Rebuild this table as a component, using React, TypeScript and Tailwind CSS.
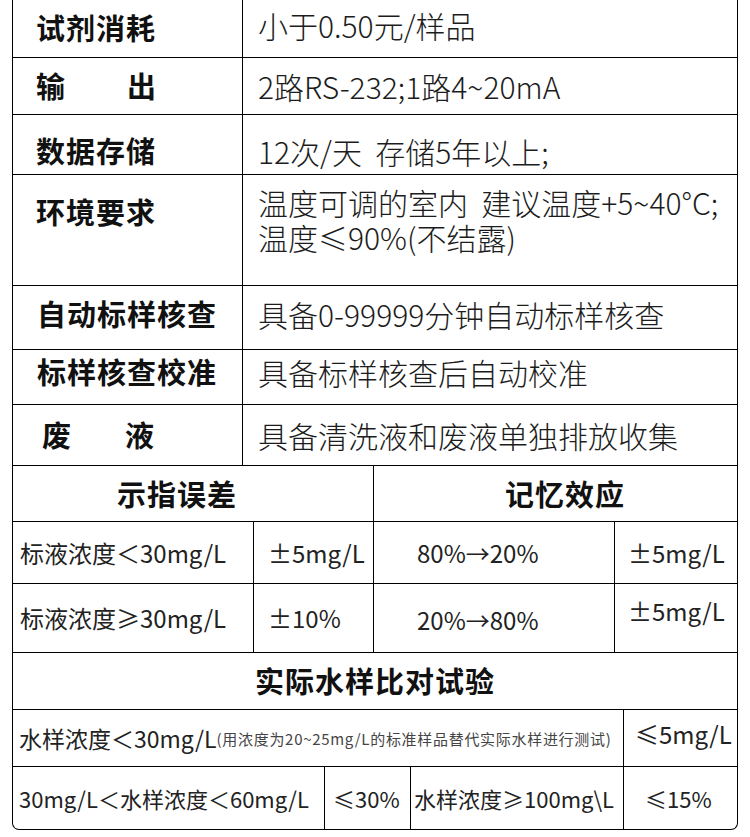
import React from "react";

/* ─── Linha de especificação (rótulo | valor) ─── */
function SpecRow({
  label,
  children,
  rowClass,
  labelClass = "",
  valueClass = "",
}: {
  label: React.ReactNode;
  children: React.ReactNode;
  rowClass: string;
  labelClass?: string;
  valueClass?: string;
}) {
  return (
    <div className={`flex border-b border-black ${rowClass}`}>
      <div
        className={`flex w-[230px] shrink-0 border-r border-black pl-[23px] text-[29px] font-bold tracking-[1px] text-[#111] ${labelClass}`}
      >
        {label}
      </div>
      <div className={`flex flex-1 whitespace-nowrap pl-[15px] text-[30px] font-light text-[#1c1c1c] ${valueClass}`}>
        {children}
      </div>
    </div>
  );
}

export default function App() {
  return (
    <div className="min-h-screen bg-white">
      <div className="ml-[12px] w-[726px] overflow-hidden rounded-b-[7px] border-x border-b border-black font-['Noto_Sans_CJK_SC',sans-serif]">
        {/* Especificações gerais */}
        <SpecRow label="试剂消耗" rowClass="h-[58px]" labelClass="items-center pb-[2px]" valueClass="items-center pb-[6px]">
          小于0.50元/样品
        </SpecRow>
        <SpecRow
          label={
            <span className="flex w-[121px] justify-between">
              <span>输</span>
              <span>出</span>
            </span>
          }
          rowClass="h-[57px]"
          labelClass="items-center"
          valueClass="items-center"
        >
          2路RS-232;1路4~20mA
        </SpecRow>
        <SpecRow label="数据存储" rowClass="h-[60px]" labelClass="items-center pt-[12px]" valueClass="items-center pt-[14px]">
          12次/天&nbsp;&nbsp;存储5年以上;
        </SpecRow>
        <SpecRow label="环境要求" rowClass="h-[111px]" labelClass="items-start pt-[19px] leading-[35px]" valueClass="items-start pt-[10px]">
          <div className="leading-[35px]">
            <div>温度可调的室内&nbsp;&nbsp;建议温度+5~40°C;</div>
            <div>温度≤90%(不结露)</div>
          </div>
        </SpecRow>
        <SpecRow label="自动标样核查" rowClass="h-[64px]" labelClass="items-center pb-[8px] pl-[24px]" valueClass="items-center pb-[6px]">
          具备0-99999分钟自动标样核查
        </SpecRow>
        <SpecRow label="标样核查校准" rowClass="h-[55px]" labelClass="items-center pb-[10px] pl-[24px]" valueClass="items-center pb-[10px]">
          具备标样核查后自动校准
        </SpecRow>
        <SpecRow
          label={
            <span className="flex w-[113px] justify-between">
              <span>废</span>
              <span>液</span>
            </span>
          }
          rowClass="h-[61px]"
          labelClass="items-center pl-[29px]"
          valueClass="items-center"
        >
          具备清洗液和废液单独排放收集
        </SpecRow>

        {/* 示指误差 / 记忆效应 */}
        <div className="flex h-[56px] border-b border-black text-[29px] font-bold tracking-[1px] text-[#111]">
          <div className="flex w-[361px] shrink-0 items-center border-r border-black pl-[104px]">示指误差</div>
          <div className="flex flex-1 items-center pl-[131px]">记忆效应</div>
        </div>
        <div className="flex h-[62px] whitespace-nowrap border-b border-black text-[24px] text-[#222]">
          <div className="flex w-[241px] shrink-0 items-center border-r border-black pl-[7px]">标液浓度＜30mg/L</div>
          <div className="flex w-[120px] shrink-0 items-center border-r border-black pl-[14px]">±5mg/L</div>
          <div className="flex w-[241px] shrink-0 items-center border-r border-black pl-[43px]">80%→20%</div>
          <div className="flex flex-1 items-center pl-[13px]">±5mg/L</div>
        </div>
        <div className="flex h-[69px] whitespace-nowrap border-b border-black text-[24px] text-[#222]">
          <div className="flex w-[241px] shrink-0 items-center border-r border-black pl-[7px]">标液浓度≥30mg/L</div>
          <div className="flex w-[120px] shrink-0 items-center border-r border-black pl-[14px]">±10%</div>
          <div className="flex w-[241px] shrink-0 items-center border-r border-black pl-[43px] pt-[4px]">20%→80%</div>
          <div className="flex flex-1 items-center pl-[13px] pb-[14px]">±5mg/L</div>
        </div>

        {/* 实际水样比对试验 */}
        <div className="flex h-[57px] items-center justify-center border-b border-black text-[29px] font-bold tracking-[1px] text-[#111]">
          实际水样比对试验
        </div>
        <div className="flex h-[57px] whitespace-nowrap border-b border-black text-[23px] text-[#222]">
          <div className="flex w-[611px] shrink-0 items-center border-r border-black pl-[6px]">
            水样浓度＜30mg/L
            <span className="pt-[3px] text-[15px] tracking-[0.7px] text-[#444]">
              (用浓度为20~25mg/L的标准样品替代实际水样进行测试)
            </span>
          </div>
          <div className="flex flex-1 items-center pl-[11px] pb-[8px] text-[24px]">≤5mg/L</div>
        </div>
        <div className="flex h-[62px] whitespace-nowrap text-[22px] text-[#222]">
          <div className="flex w-[312px] shrink-0 items-center border-r border-black pl-[6px]">30mg/L＜水样浓度＜60mg/L</div>
          <div className="flex w-[86px] shrink-0 items-center border-r border-black pl-[8px]">≤30%</div>
          <div className="flex w-[213px] shrink-0 items-center border-r border-black pl-[3px]">水样浓度≥100mg\L</div>
          <div className="flex flex-1 items-center pl-[21px]">≤15%</div>
        </div>
      </div>
    </div>
  );
}
